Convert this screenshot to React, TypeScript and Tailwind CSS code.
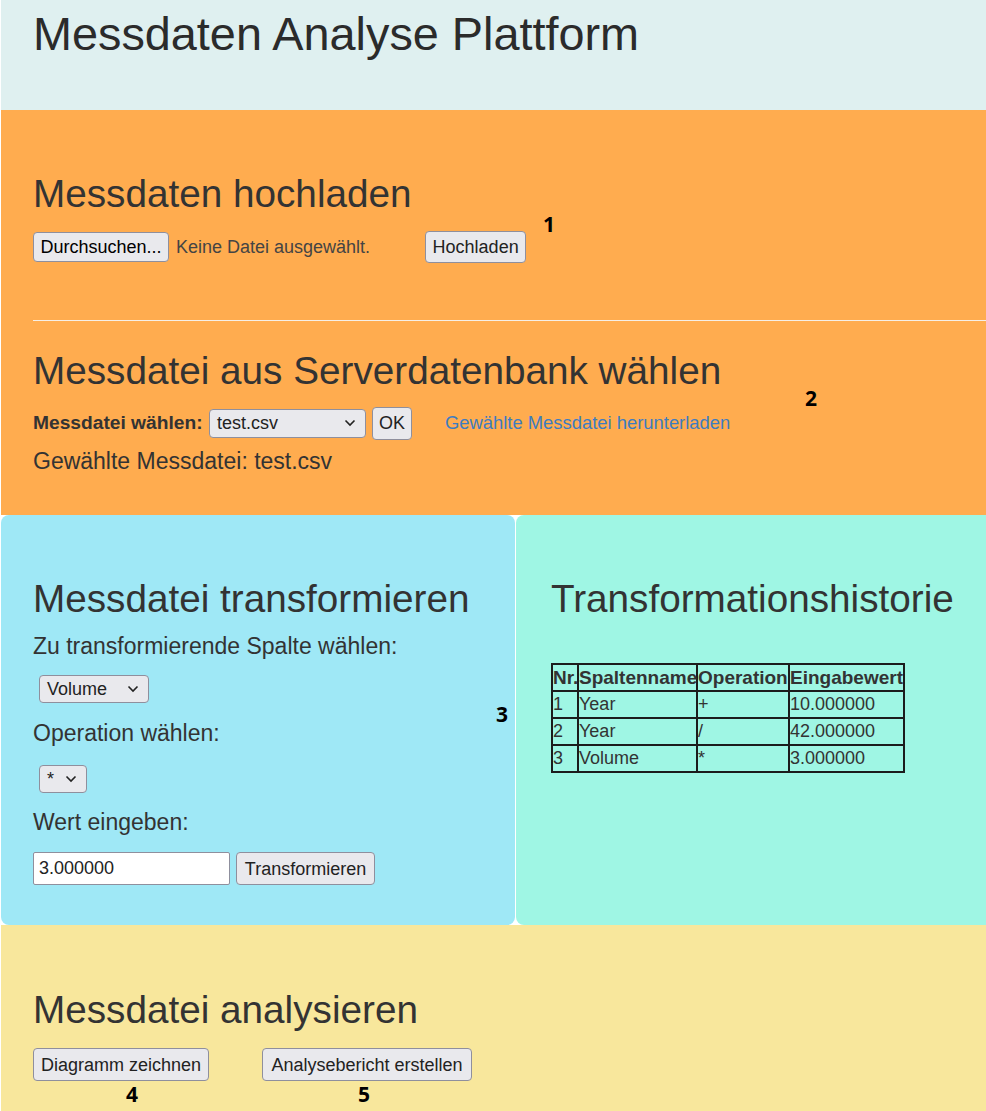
import React from "react";

const FONT = "font-['Liberation_Sans',Arial,sans-serif]";

function Chevron() {
  return (
    <svg width="12" height="8" viewBox="0 0 12 8" className="shrink-0">
      <polyline points="1.5,1.5 6,6 10.5,1.5" fill="none" stroke="#222" strokeWidth="1.6" />
    </svg>
  );
}

function FakeSelect({ value, className }: { value: string; className: string }) {
  return (
    <div
      className={`flex items-center justify-between rounded-[4px] border border-[#8f8f9d] bg-[#e9e9ed] pl-[7px] pr-[9px] text-[18px] leading-none text-[#222] ${className}`}
    >
      <span>{value}</span>
      <Chevron />
    </div>
  );
}

function Btn({ children, className }: { children: React.ReactNode; className: string }) {
  return (
    <button
      type="button"
      className={`flex shrink-0 items-center justify-center whitespace-nowrap rounded-[4px] border border-[#8f8f9d] bg-[#e9e9ed] px-0 text-[18px] leading-none text-[#222] ${className}`}
    >
      {children}
    </button>
  );
}

function Note({ n, className }: { n: string; className: string }) {
  return (
    <div
      className={`absolute font-['Open_Sans',sans-serif] text-[21px] font-bold leading-none text-black ${className}`}
    >
      {n}
    </div>
  );
}

export default function App() {
  const rows = [
    ["1", "Year", "+", "10.000000"],
    ["2", "Year", "/", "42.000000"],
    ["3", "Volume", "*", "3.000000"],
  ];
  return (
    <div className={`relative w-[986px] bg-white pl-px text-[#333] ${FONT}`}>
      {/* Header */}
      <div className="h-[110px] bg-[#dff0f0] pl-[32px] pt-[8px]">
        <h1 className="text-[46.8px] font-normal leading-[52px] text-[#2b2b2b]">Messdaten Analyse Plattform</h1>
      </div>

      {/* Orange section */}
      <div className="h-[405px] bg-[#ffac4f] pl-[32px] pt-[62px]">
        <h2 className="text-[38.7px] leading-[44px] text-[#333]">Messdaten hochladen</h2>
        <div className="mt-[15px] flex h-[32px] items-center">
          <Btn className="h-[30px] w-[136px] text-black">Durchsuchen...</Btn>
          <span className="ml-[7px] text-[18px] text-[#444]">Keine Datei ausgewählt.</span>
          <Btn className="ml-[55px] h-[32px] w-[101px]">Hochladen</Btn>
        </div>
        <div className="mt-[57px] h-px bg-[#f6efe6]" />
        <h2 className="mt-[28px] text-[38.7px] leading-[44px] text-[#333]">Messdatei aus Serverdatenbank wählen</h2>
        <div className="mt-[13px] flex h-[34px] items-center">
          <span className="w-[170px] whitespace-nowrap text-[19.2px] font-bold text-[#333]">Messdatei wählen:</span>
          <FakeSelect value="test.csv" className="ml-[6px] h-[29px] w-[157px]" />
          <Btn className="ml-[6px] h-[33px] w-[40px]">OK</Btn>
          <a className="ml-[33px] text-[18.4px] text-[#3d7cc0]">Gewählte Messdatei herunterladen</a>
        </div>
        <p className="mt-[8px] text-[23px] leading-[26px] text-[#333]">Gewählte Messdatei: test.csv</p>
      </div>

      {/* Panels */}
      <div className="flex h-[410px]">
        <div className="w-[514px] rounded-[8px] bg-[#9fe8f6] pl-[32px] pt-[62px]">
          <h2 className="text-[38.7px] leading-[44px] text-[#333]">Messdatei transformieren</h2>
          <p className="mt-[12px] text-[23px] leading-[26px]">Zu transformierende Spalte wählen:</p>
          <FakeSelect value="Volume" className="ml-[6px] mt-[16px] h-[28px] w-[110px]" />
          <p className="mt-[17px] text-[23px] leading-[26px]">Operation wählen:</p>
          <FakeSelect value="*" className="ml-[6px] mt-[19px] h-[28px] w-[48px]" />
          <p className="mt-[16px] text-[23px] leading-[26px]">Wert eingeben:</p>
          <div className="mt-[17px] flex h-[33px] items-center">
            <div className="flex h-[33px] w-[197px] items-center rounded-[2px] border border-[#8f8f9d] bg-white pl-[5px] text-[18px] text-[#222]">
              3.000000
            </div>
            <Btn className="ml-[6px] h-[33px] w-[139px]">Transformieren</Btn>
          </div>
        </div>
        <div className="ml-px flex-1 rounded-l-[8px] bg-[#9ff6e4] pl-[35px] pt-[62px]">
          <h2 className="text-[38.7px] leading-[44px] text-[#333]">Transformationshistorie</h2>
          <table className="mt-[42px] w-[354px] table-fixed border-separate border-spacing-0 border border-[#1c1c1c] text-[18px] leading-[25px] text-[#333]">
            <thead>
              <tr>
                <th className="w-[26px] whitespace-nowrap border border-[#1c1c1c] p-0 text-left text-[19px] font-bold">Nr.</th>
                <th className="w-[119px] whitespace-nowrap border border-[#1c1c1c] p-0 text-left text-[19px] font-bold">Spaltenname</th>
                <th className="w-[92px] whitespace-nowrap border border-[#1c1c1c] p-0 text-left text-[19px] font-bold">Operation</th>
                <th className="w-[115px] whitespace-nowrap border border-[#1c1c1c] p-0 text-left text-[19px] font-bold">Eingabewert</th>
              </tr>
            </thead>
            <tbody>
              {rows.map((r) => (
                <tr key={r[0]}>
                  {r.map((c, i) => (
                    <td key={i} className="whitespace-nowrap border border-[#1c1c1c] p-0 align-top">
                      {c}
                    </td>
                  ))}
                </tr>
              ))}
            </tbody>
          </table>
        </div>
      </div>

      {/* Yellow section */}
      <div className="h-[186px] bg-[#f8e79c] pl-[32px] pt-[63px]">
        <h2 className="text-[38.7px] leading-[44px] text-[#333]">Messdatei analysieren</h2>
        <div className="mt-[16px] flex h-[33px] items-center">
          <Btn className="h-[33px] w-[176px]">Diagramm zeichnen</Btn>
          <Btn className="ml-[53px] h-[33px] w-[210px]">Analysebericht erstellen</Btn>
        </div>
      </div>

      <Note n="1" className="left-[543px] top-[214px]" />
      <Note n="2" className="left-[805px] top-[388px]" />
      <Note n="3" className="left-[496px] top-[704px]" />
      <Note n="4" className="left-[126px] top-[1084px]" />
      <Note n="5" className="left-[358px] top-[1084px]" />
    </div>
  );
}
